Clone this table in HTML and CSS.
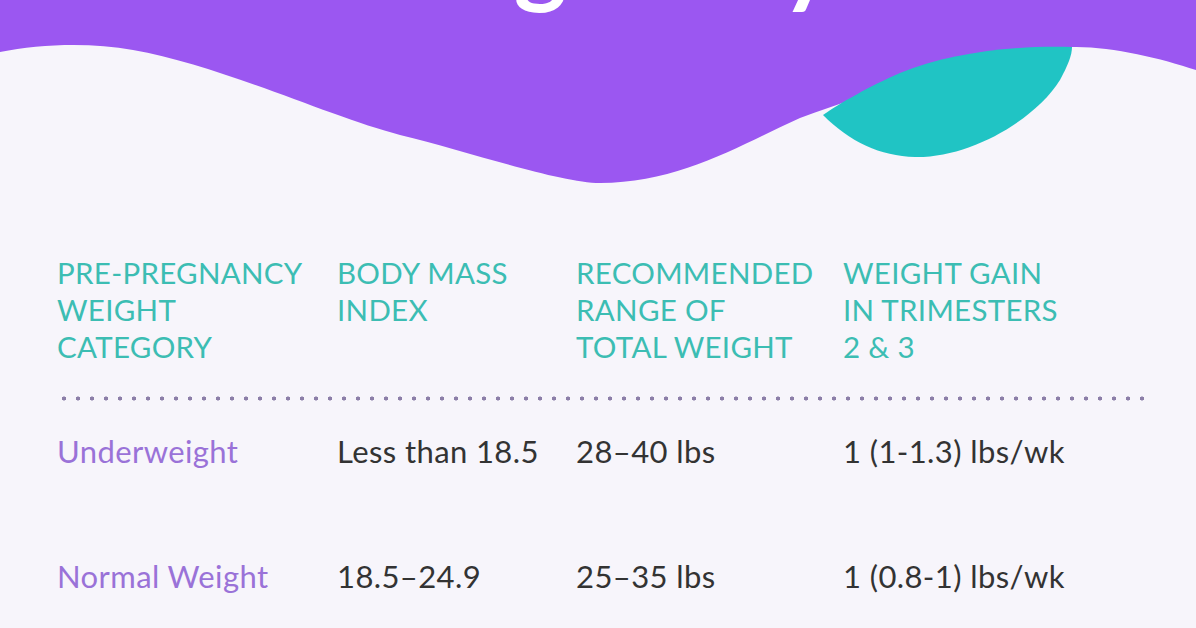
FILE: index.html
```html
<!DOCTYPE html>
<html lang="en">
<head>
<meta charset="utf-8">
<title>Weight Gain During Pregnancy</title>
<link rel="stylesheet" href="styles.css">
</head>
<body>
<header class="hero">
  <svg class="wave" width="1196" height="200" viewBox="0 0 1196 200" aria-hidden="true">
    <path fill="#9b57f1" d="M0,0 H1196 V70 C1160,58 1110,46 1072,47 C1000,49 900,82 800,118 C740,145 680,183 600,183 C560,183 470,152 400,135 C330,117 220,65 133,50 C90,42 40,44 0,52 Z"/>
    <path fill="#20c4c4" d="M823,115 C850,142 880,156 915,157 C970,158 1035,120 1060,80 C1068,65 1072,55 1072,47 C1020,45 950,52 900,73 C870,86 840,103 823,115 Z"/>
  </svg>
  <h1 class="title">Pregnancy</h1>
</header>
<main class="table">
  <div class="grid head">
    <div>PRE-PREGNANCY<br>WEIGHT<br>CATEGORY</div>
    <div>BODY MASS<br>INDEX</div>
    <div>RECOMMENDED<br>RANGE OF<br>TOTAL WEIGHT</div>
    <div>WEIGHT GAIN<br>IN TRIMESTERS<br>2 &amp; 3</div>
  </div>
  <div class="dots"></div>
  <div class="grid row">
    <div class="label">Underweight</div>
    <div>Less than 18.5</div>
    <div>28–40 lbs</div>
    <div>1 (1-1.3) lbs/wk</div>
  </div>
  <div class="grid row">
    <div class="label">Normal Weight</div>
    <div>18.5–24.9</div>
    <div>25–35 lbs</div>
    <div>1 (0.8-1) lbs/wk</div>
  </div>
</main>
</body>
</html>
```

FILE: styles.css
```css
html, body {
  margin: 0;
  padding: 0;
}
body {
  background: #f7f5fb;
  font-family: Lato, "Open Sans", sans-serif;
  width: 1196px;
  height: 628px;
  overflow: hidden;
}
.hero {
  display: grid;
  height: 200px;
  overflow: hidden;
}
.hero > * {
  grid-area: 1 / 1;
}
.wave {
  display: block;
}
.title {
  align-self: start;
  margin: -94px 0 0 0;
  font-size: 101px;
  line-height: 1;
  font-weight: 700;
  color: #ffffff;
  text-align: center;
}
.table {
  padding: 54px 56px 0 57px;
}
.grid {
  display: grid;
  grid-template-columns: 280px 239px 267px 1fr;
}
.head {
  color: #3cbdb3;
  font-size: 29.5px;
  line-height: 37px;
  letter-spacing: 0.3px;
}
.dots {
  margin-top: 31px;
  height: 5px;
  width: 1087px;
  background-image: radial-gradient(circle, #8c7ea8 1.8px, transparent 2.3px);
  background-size: 14px 5px;
  background-repeat: repeat-x;
}
.row {
  font-size: 31px;
  line-height: 40px;
  letter-spacing: 0.4px;
  color: #333333;
  margin-top: 30px;
}
.row + .row {
  margin-top: 85px;
}
.label {
  color: #9a72d8;
}
```
